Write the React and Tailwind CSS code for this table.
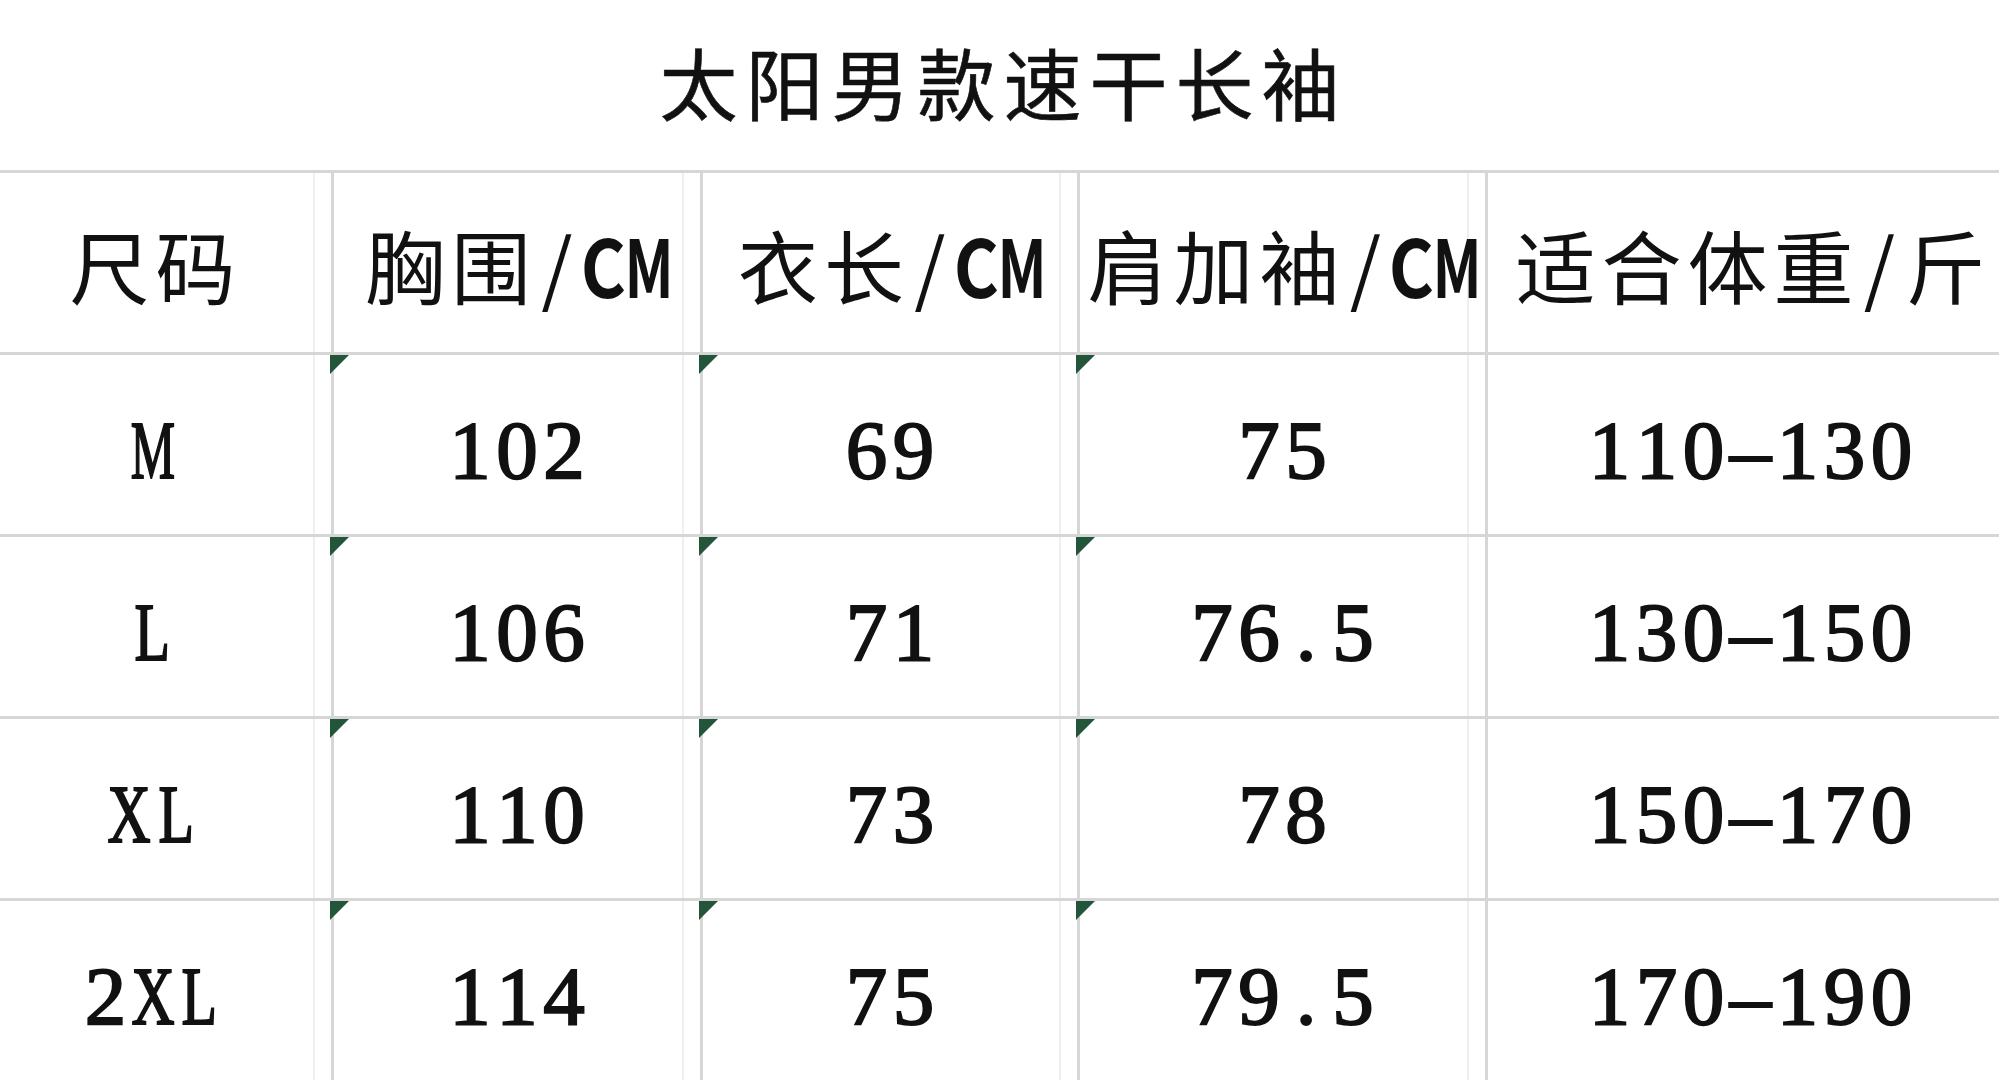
import React from "react";

const isCJK = (c) => /[\u4e00-\u9fff]/.test(c);

const headScale = {
  M: "inline-block scale-x-[0.72] font-semibold",
  C: "inline-block scale-x-[0.86] font-semibold",
  "/": "inline-block",
};
const dataScale = {
  M: "inline-block scale-x-[0.6]",
  X: "inline-block scale-x-[0.72]",
  L: "inline-block scale-x-[0.7]",
};

function Title({ text }) {
  return (
    <div className="flex font-['Noto_Sans_CJK_SC',sans-serif] text-[78px] leading-none text-[#111] [-webkit-text-stroke:0.6px_#111]">
      {text.split("").map((c, i) => (
        <span key={i} className="flex w-[86px] justify-center">
          {c}
        </span>
      ))}
    </div>
  );
}

function HeadText({ text }) {
  return (
    <div className="flex font-['Noto_Sans_CJK_SC',sans-serif] text-[80px] leading-none text-[#111]">
      {text.split("").map((c, i) =>
        isCJK(c) ? (
          <span key={i} className="flex w-[86px] justify-center">
            {c}
          </span>
        ) : (
          <span key={i} className="flex w-[46px] justify-center">
            <span className={headScale[c] || "inline-block"}>{c}</span>
          </span>
        )
      )}
    </div>
  );
}

function DataText({ text }) {
  return (
    <div className="flex pt-[12px] font-['Liberation_Serif',serif] font-normal text-[83px] leading-none text-[#111] [-webkit-text-stroke:2px_#111]">
      {text.split("").map((c, i) => (
        <span key={i} className="flex w-[47px] justify-center">
          <span className={dataScale[c] || "inline-block"}>{c}</span>
        </span>
      ))}
    </div>
  );
}

function Tri() {
  return (
    <svg className="absolute -left-[4px] top-0" width="19" height="19" viewBox="0 0 19 19">
      <polygon points="0,0 19,0 0,19" fill="#22553a" />
    </svg>
  );
}

const cellBase =
  "relative flex h-full items-center justify-center border-r-[3px] border-[#d6d6d6] bg-[linear-gradient(to_left,transparent_16px,#efefef_16px,#efefef_18px,transparent_18px)]";

const rows = [
  ["M", "102", "69", "75", "110–130"],
  ["L", "106", "71", "76.5", "130–150"],
  ["XL", "110", "73", "78", "150–170"],
  ["2XL", "114", "75", "79.5", "170–190"],
];

const headers = ["尺码", "胸围/CM", "衣长/CM", "肩加袖/CM", "适合体重/斤"];

function Row({ cells, header }) {
  const T = header ? HeadText : DataText;
  return (
    <div className="flex h-[182px] border-b-[3px] border-[#d6d6d6]">
      <div className={`${cellBase} w-[334px] pr-[26px]`}>
        <T text={cells[0]} />
      </div>
      <div className={`${cellBase} w-[369px]`}>
        {!header && <Tri />}
        <T text={cells[1]} />
      </div>
      <div className={`${cellBase} w-[377px]`}>
        {!header && <Tri />}
        <T text={cells[2]} />
      </div>
      <div className={`${cellBase} w-[408px]`}>
        {!header && <Tri />}
        <T text={cells[3]} />
      </div>
      <div className="flex h-full flex-1 items-center justify-center pl-[14px]">
        <T text={cells[4]} />
      </div>
    </div>
  );
}

export default function App() {
  return (
    <div className="h-[1080px] w-[1999px] overflow-hidden bg-white">
      <div className="flex h-[170px] items-center justify-center pb-[8px]">
        <Title text="太阳男款速干长袖" />
      </div>
      <div className="border-t-[3px] border-[#d6d6d6]">
        <Row cells={headers} header />
        {rows.map((r, i) => (
          <Row key={i} cells={r} />
        ))}
      </div>
    </div>
  );
}
